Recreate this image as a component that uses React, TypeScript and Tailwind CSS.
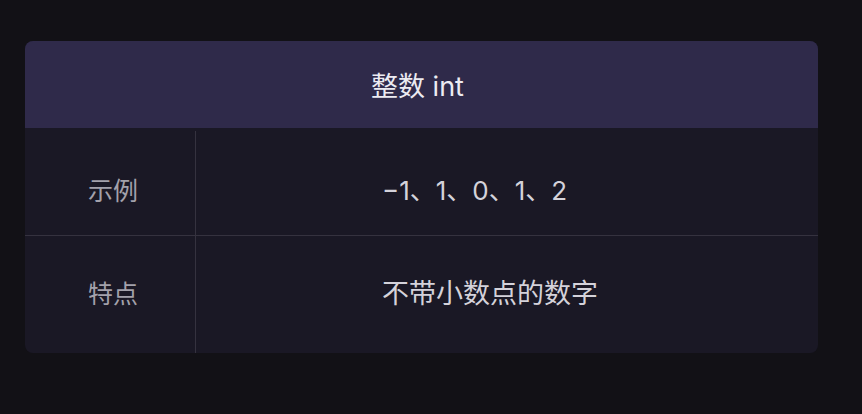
const font = { fontFamily: '"Inter", "Noto Sans CJK SC", sans-serif' }

const rows = [
  { label: "示例", value: "−1、1、0、1、2", h: "h-[108px]", pt: "pt-[18px]", size: "text-[26px]" },
  { label: "特点", value: "不带小数点的数字", h: "h-[117px]", pt: "pt-0", size: "text-[27px]" },
]

export default function App() {
  return (
    <div className="w-[862px] h-[414px] bg-[#121116] pt-[41px] pl-[25px]" style={font}>
      <div className="w-[793px] rounded-[8px] overflow-hidden bg-[#1a1825]">
        <div className="h-[87px] bg-[#2f2a4a] flex items-center pt-[5px] pl-[346px] text-[27px] text-[#ecebf2]">
          整数 int
        </div>
        {rows.map((r, i) => (
          <div
            key={r.label}
            className={`flex ${r.h} ${i === 0 ? "border-b border-[#35323f]" : ""}`}
          >
            <div className={`w-[171px] shrink-0 border-r border-[#35323f] flex items-center pl-[63px] text-[25px] text-[#a3a1ab] ${i === 0 ? "mt-[3px]" : ""} ${r.pt}`}>
              {r.label}
            </div>
            <div className={`flex-1 flex items-center pl-[186px] ${r.size} text-[#d4d2da] ${r.pt}`}>
              {r.value}
            </div>
          </div>
        ))}
      </div>
    </div>
  )
}
